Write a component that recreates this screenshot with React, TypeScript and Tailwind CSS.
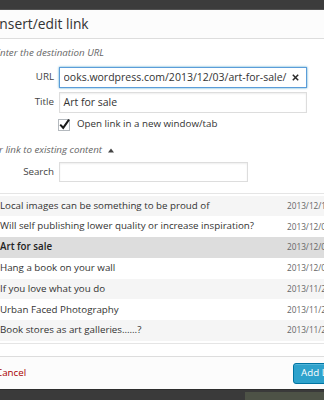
import React from 'react';

const rows = [
  { title: 'Local images can be something to be proud of', date: '2013/12/16' },
  { title: 'Will self publishing lower quality or increase inspiration?', date: '2013/12/05' },
  { title: 'Art for sale', date: '2013/12/03', selected: true },
  { title: 'Hang a book on your wall', date: '2013/12/02' },
  { title: 'If you love what you do', date: '2013/11/29' },
  { title: 'Urban Faced Photography', date: '2013/11/27' },
  { title: 'Book stores as art galleries……?', date: '2013/11/25' },
];

export default function App() {
  return (
    <div className="w-[324px] h-[400px] overflow-hidden bg-white font-['Open_Sans',sans-serif] text-[#333]">
      <div className="h-[10px] bg-[#3c3c3c] border-b border-[#525252]" />

      <div className="-ml-[8px] w-[380px] h-[379px] flex flex-col">
        <div className="h-[29px] shrink-0 border-b border-[#dddddd] bg-[#fcfcfc] pl-[3.5px] flex items-center text-[13.8px] text-[#333]">
          Insert/edit link
        </div>

        <div className="mt-[8px] pl-[3px] leading-[12px] italic text-[9.75px] text-[#666]">
          Enter the destination URL
        </div>

        <div className="mt-[8px] flex items-center h-[21px]">
          <span className="w-[62px] shrink-0 text-right text-[9.75px] text-[#444]">URL</span>
          <div className="ml-[5px] w-[248px] shrink-0 h-[21px] border border-[#5b9dd9] shadow-[0_0_2px_rgba(30,140,190,0.8)] flex items-center pl-[3.5px] pr-[7px] text-[10.5px] text-[#333]">
            <span className="flex-1 whitespace-nowrap overflow-hidden">ooks.wordpress.com/2013/12/03/art-for-sale/</span>
            <svg width="7" height="7" viewBox="0 0 7 7" className="ml-[3px]">
              <path d="M0.8 0.8 L6.2 6.2 M6.2 0.8 L0.8 6.2" stroke="#2a2a2a" strokeWidth="1.5" />
            </svg>
          </div>
        </div>

        <div className="mt-[4px] flex items-center h-[21px]">
          <span className="w-[62px] shrink-0 text-right text-[9.75px] text-[#444]">Title</span>
          <div className="ml-[5px] w-[248px] shrink-0 h-[21px] border border-[#dddddd] shadow-[inset_0_1px_2px_rgba(0,0,0,0.07)] flex items-center pl-[3.5px] text-[10.5px] text-[#333]">
            Art for sale
          </div>
        </div>

        <div className="mt-[5px] flex items-center h-[13px]">
          <div className="ml-[66px] relative w-[12px] h-[12px] border border-[#b4b9be] bg-white">
            <svg width="13" height="13" viewBox="0 0 13 13" className="absolute -left-[1px] -top-[2px]">
              <path d="M2.2 6.6 L5.2 9.8 L11 1.6" fill="none" stroke="#1a1a1a" strokeWidth="2" />
            </svg>
          </div>
          <span className="ml-[7px] text-[9.75px] text-[#333]">Open link in a new window/tab</span>
        </div>

        <div className="mt-[13px] flex items-center leading-[12px] italic text-[9.75px] text-[#666]">
          <span>Or link to existing content</span>
          <svg width="6" height="5" viewBox="0 0 6 5" className="ml-[6px]">
            <path d="M0 4.5 L3 0.5 L6 4.5 Z" fill="#444" />
          </svg>
        </div>

        <div className="mt-[6px] flex items-center h-[20px]">
          <span className="w-[62px] shrink-0 text-right text-[9.75px] text-[#444]">Search</span>
          <div className="ml-[5px] w-[189px] shrink-0 h-[20px] border border-[#dddddd] shadow-[inset_0_1px_2px_rgba(0,0,0,0.07)]" />
        </div>

        <div className="mt-[11px] border-t border-b border-[#e5e5e5] pt-[1.5px] pb-[1.5px]">
          {rows.map((r, i) => (
            <div
              key={i}
              className={`h-[20.8px] pl-[8px] grid grid-cols-[287px_1fr] items-center whitespace-nowrap ${
                r.selected ? 'bg-[#dddddd]' : i % 2 === 0 ? 'bg-[#f5f5f5]' : 'bg-white'
              }`}
            >
              <span className={`text-[9.75px] overflow-hidden ${r.selected ? 'font-semibold text-[#222]' : 'text-[#333]'}`}>
                {r.title}
              </span>
              <span className="text-[8.25px] text-[#666]">{r.date}</span>
            </div>
          ))}
        </div>

        <div className="flex-1" />

        <div className="h-[33px] shrink-0 border-t border-[#dddddd] bg-[#fcfcfc] flex items-center">
          <span className="w-[301px] shrink-0 pl-[4px] text-[9.75px] text-[#aa0000]">Cancel</span>
          <div className="h-[21px] shrink-0 px-[7px] flex items-center rounded-[3px] bg-[#2ea2cc] border border-[#0074a2] shadow-[inset_0_1px_0_rgba(120,200,230,0.5)] text-[9.75px] text-white whitespace-nowrap">
            Add Link
          </div>
        </div>
      </div>

      <div className="h-[11px] bg-[#3a3a3a] border-t border-[#2e2e2e] flex">
        <div className="ml-[245px] mt-[2px] flex-1 bg-[#4d5246]" />
      </div>
    </div>
  );
}
